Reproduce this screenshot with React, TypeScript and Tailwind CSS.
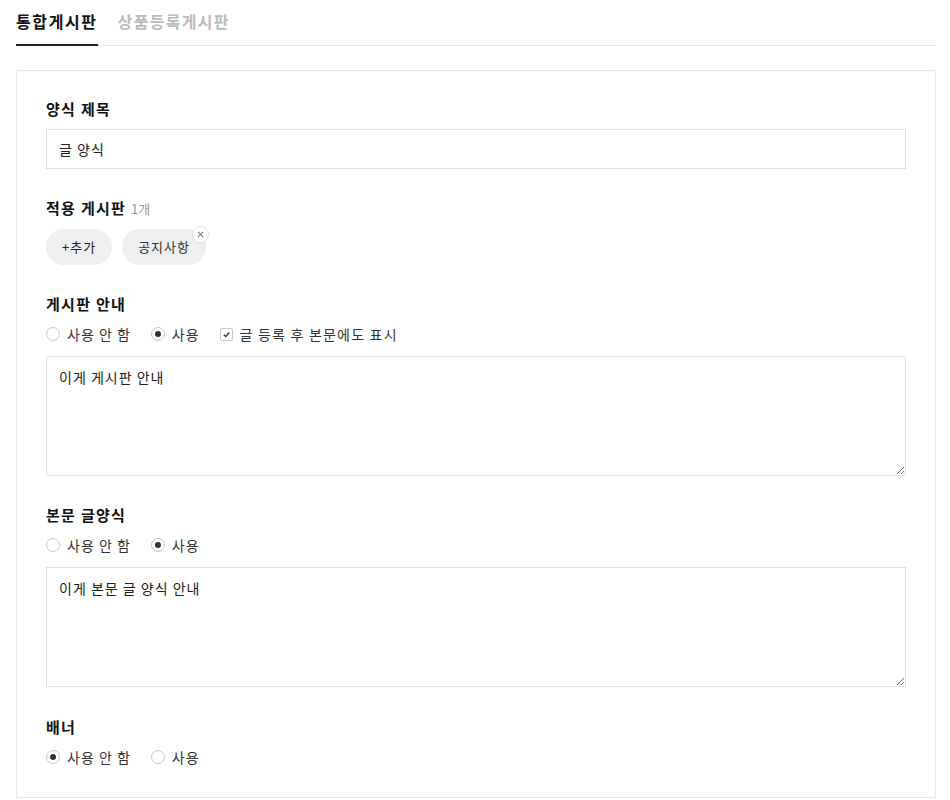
import React from 'react';

const font = { fontFamily: '"Noto Sans CJK KR", "Noto Sans", sans-serif' };

const Radio = ({ checked, label }: { checked: boolean; label: string }) => (
  <label className="flex items-center gap-[7px] text-[14px] tracking-[1px] text-[#333]">
    <span className="flex h-[14px] w-[14px] items-center justify-center rounded-full border border-[#c8c8c8] bg-white">
      {checked && <span className="h-[6px] w-[6px] rounded-full bg-[#333]" />}
    </span>
    {label}
  </label>
);

const Check = ({ label }: { label: string }) => (
  <label className="flex items-center gap-[7px] text-[14px] tracking-[1.2px] text-[#333]">
    <span className="flex h-[13px] w-[13px] items-center justify-center rounded-[2px] border border-[#c8c8c8] bg-white">
      <svg width="9" height="9" viewBox="0 0 10 10" fill="none">
        <path d="M2 5.2 L4.2 7.3 L8 2.8" stroke="#333" strokeWidth="1.5" />
      </svg>
    </span>
    {label}
  </label>
);

const Label = ({ children }: { children: React.ReactNode }) => (
  <div className="mb-[9px] text-[15px] font-bold leading-[22px] tracking-[1.3px] text-[#111]">{children}</div>
);

const Area = ({ text }: { text: string }) => (
  <textarea
    defaultValue={text}
    className="block h-[120px] w-full resize-y border border-[#e2e2e2] px-3 py-[10px] text-[14px] leading-[20px] tracking-[1px] text-[#222] outline-none"
    style={font}
  />
);

export default function App() {
  return (
    <div className="min-h-[800px] bg-white pl-4 pr-[14px]" style={font}>
      <div className="flex gap-5 border-b border-[#e6e6e6]">
        <div className="-mb-px border-b-2 border-[#222] pb-[11px] pt-[9px] text-[16px] font-bold leading-6 tracking-[1.6px] text-[#111]">
          통합게시판
        </div>
        <div className="pb-[11px] pt-[9px] text-[16px] font-bold leading-6 tracking-[1.3px] text-[#bbb]">상품등록게시판</div>
      </div>

      <div className="mt-6 border border-[#e8e8e8] px-[29px] pb-[30px] pt-[27px]">
        <Label>양식 제목</Label>
        <input
          defaultValue="글 양식"
          className="block h-10 w-full border border-[#e2e2e2] px-3 text-[14px] tracking-[1px] text-[#222] outline-none"
          style={font}
        />

        <div className="mt-7">
          <Label>
            적용 게시판 <span className="text-[13px] font-normal tracking-normal text-[#999]">1개</span>
          </Label>
          <div className="flex gap-[10px]">
            <button className="h-9 rounded-full bg-[#eeeff1] px-4 text-[13px] tracking-[1px] text-[#222]">+추가</button>
            <div className="relative">
              <button className="h-9 rounded-full bg-[#eeeff1] px-4 text-[13px] tracking-[1px] text-[#333]">공지사항</button>
              <span className="absolute -right-[3px] -top-[3px] flex h-[17px] w-[17px] items-center justify-center rounded-full border border-[#e2e2e2] bg-white">
                <svg width="7" height="7" viewBox="0 0 8 8">
                  <path d="M1 1 L7 7 M7 1 L1 7" stroke="#777" strokeWidth="1.2" />
                </svg>
              </span>
            </div>
          </div>
        </div>

        <div className="mt-7">
          <Label>게시판 안내</Label>
          <div className="mb-3 flex h-5 items-center gap-5">
            <Radio checked={false} label="사용 안 함" />
            <Radio checked label="사용" />
            <Check label="글 등록 후 본문에도 표시" />
          </div>
          <Area text="이게 게시판 안내" />
        </div>

        <div className="mt-7">
          <Label>본문 글양식</Label>
          <div className="mb-3 flex h-5 items-center gap-5">
            <Radio checked={false} label="사용 안 함" />
            <Radio checked label="사용" />
          </div>
          <Area text="이게 본문 글 양식 안내" />
        </div>

        <div className="mt-[29px]">
          <Label>배너</Label>
          <div className="flex h-5 items-center gap-5">
            <Radio checked label="사용 안 함" />
            <Radio checked={false} label="사용" />
          </div>
        </div>
      </div>
    </div>
  );
}
